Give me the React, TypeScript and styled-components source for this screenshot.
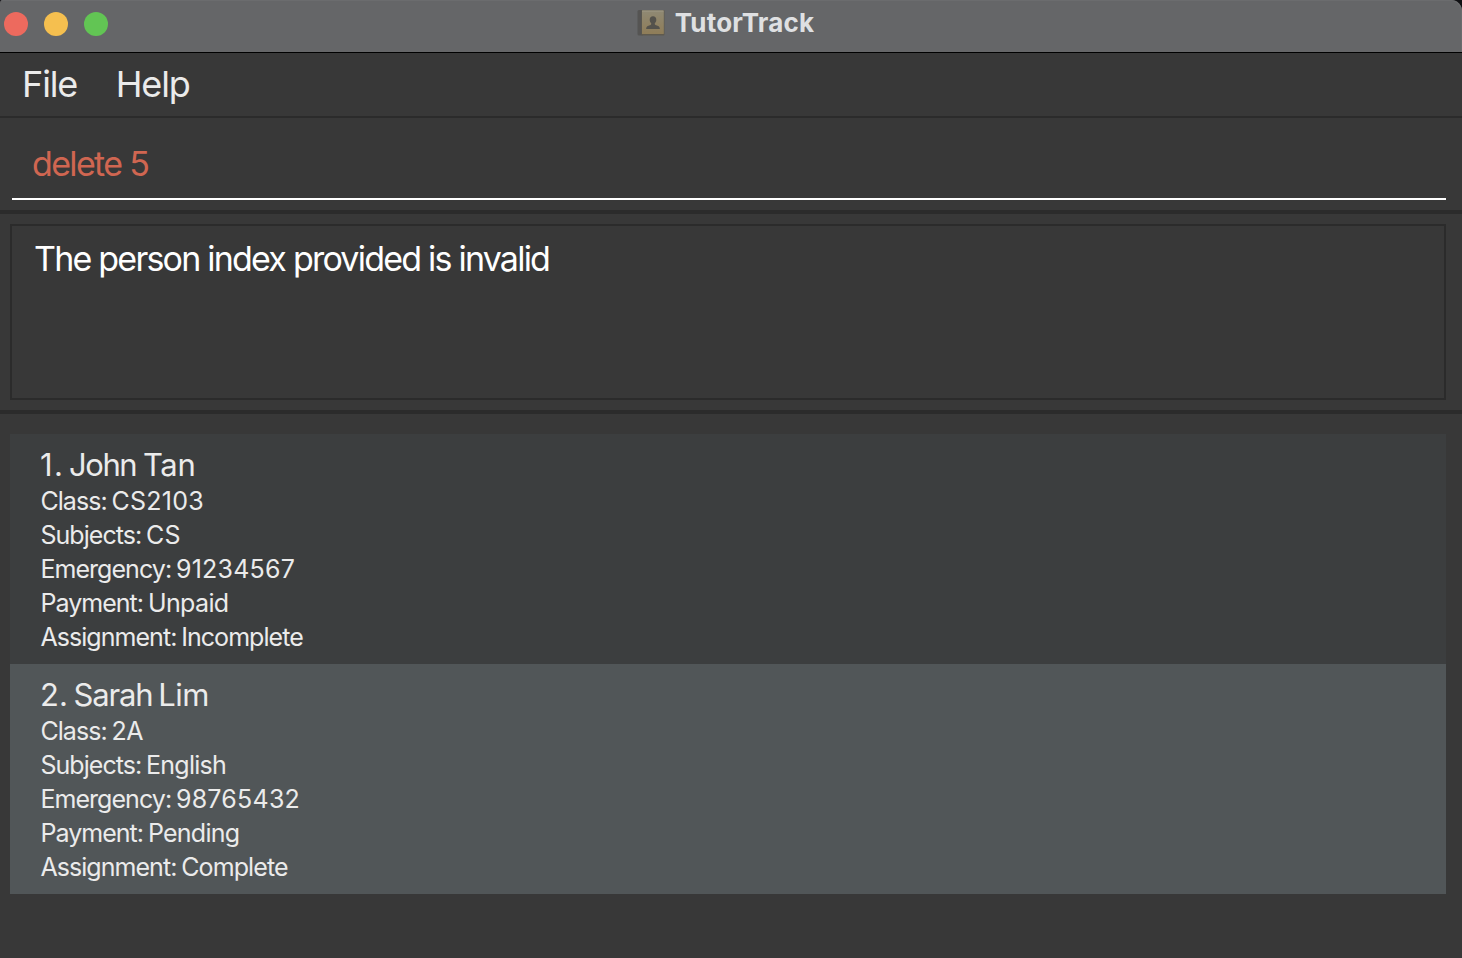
import React from 'react';
import styled, { createGlobalStyle } from 'styled-components';

const GlobalStyle = createGlobalStyle`
  *, *::before, *::after { box-sizing: border-box; }
  body {
    margin: 0;
    background: #000;
    font-family: Inter, "Noto Sans", sans-serif;
    overflow: hidden;
  }
`;

const Window = styled.div`
  display: flex;
  flex-direction: column;
  width: 1462px;
  height: 958px;
  overflow: hidden;
  background: #383838;
`;

const TitleBarBackdrop = styled.div`
  flex: none;
  background: #101013;
  border-bottom: 1px solid #000;
`;

const TitleBar = styled.header`
  display: grid;
  grid-template-columns: 1fr auto 1fr;
  align-items: center;
  height: 52px;
  padding: 0 15px 4px 4px;
  background: #656668;
  border-radius: 3px 11px 0 0;
  box-shadow: inset -1px 1px 0 #6b6c6e;
`;

const WindowControls = styled.div`
  display: flex;
  gap: 16px;
`;

const ControlDot = styled.span<{ $color: string }>`
  width: 24px;
  height: 24px;
  border-radius: 50%;
  background: ${({ $color }) => $color};
`;

const Title = styled.h1`
  display: flex;
  align-items: center;
  gap: 10px;
  margin: 0;
  font-size: 26px;
  line-height: 46px;
  font-weight: 700;
  letter-spacing: 0.22px;
  color: #dfe0e2;
  padding-bottom: 2px;
`;

const MenuBar = styled.nav`
  display: flex;
  flex: none;
  gap: 38.5px;
  height: 65px;
  padding-left: 22px;
  border-bottom: 2px solid #2b2b2b;
`;

const MenuItem = styled.span`
  font-size: 36px;
  line-height: 62px;
  letter-spacing: -1.12px;
  color: #ebebeb;
`;

const CommandSection = styled.section`
  flex: none;
  height: 96px;
  padding: 0 16px 0 12px;
  border-bottom: 4px solid #2b2b2b;
`;

const CommandField = styled.div`
  height: 82px;
  padding: 24px 0 0 20px;
  border-bottom: 2px solid #fff;
  font-size: 34px;
  line-height: 44px;
  letter-spacing: -1.65px;
  color: #d06651;
`;

const ResultSection = styled.section`
  flex: none;
  height: 200px;
  padding: 10px 16px 10px 10px;
  border-bottom: 4px solid #2b2b2b;
`;

const ResultBox = styled.div`
  height: 176px;
  padding: 11px 22px;
  border: 2px solid #2b2b2b;
  font-size: 34px;
  line-height: 44px;
  letter-spacing: -1.78px;
  color: #fff;
`;

const PersonList = styled.main`
  padding: 20px 16px 0 10px;
`;

const PersonCard = styled.article<{ $highlighted: boolean }>`
  height: 230px;
  padding: 12px 30px 10px;
  background: ${({ $highlighted }) => ($highlighted ? '#515658' : '#3c3e3f')};
  color: #ebebeb;
`;

const PersonName = styled.h2`
  display: flex;
  margin: 0;
  font-size: 31px;
  line-height: 38px;
  font-weight: 400;
`;

const NamePart = styled.span<{ $tracking: number; $gap: number }>`
  letter-spacing: ${({ $tracking }) => $tracking}px;
  margin-right: ${({ $gap }) => $gap}px;
`;

const Detail = styled.div`
  padding-left: 0.4px;
  font-size: 25px;
  line-height: 34px;
  white-space: pre;
`;

const DetailLabel = styled.span`
  letter-spacing: -0.95px;
  word-spacing: -1.3px;
`;

const DetailValue = styled.span<{ $tracking: number }>`
  letter-spacing: ${({ $tracking }) => $tracking}px;
`;

type Part = { text: string; tracking: number; gap: number };
type Field = { label: string; value: string; tracking: number };
type Person = { name: Part[]; fields: Field[] };

const people: Person[] = [
  {
    name: [
      { text: '1.', tracking: 1.4, gap: 4.6 },
      { text: 'John', tracking: -1.4, gap: 6.6 },
      { text: 'Tan', tracking: -0.3, gap: 0 },
    ],
    fields: [
      { label: 'Class', value: 'CS2103', tracking: 0.25 },
      { label: 'Subjects', value: 'CS', tracking: 0.3 },
      { label: 'Emergency', value: '91234567', tracking: 0.22 },
      { label: 'Payment', value: 'Unpaid', tracking: -0.62 },
      { label: 'Assignment', value: 'Incomplete', tracking: -0.95 },
    ],
  },
  {
    name: [
      { text: '2.', tracking: 0, gap: 5.6 },
      { text: 'Sarah', tracking: -1.15, gap: 5.9 },
      { text: 'Lim', tracking: -0.6, gap: 0 },
    ],
    fields: [
      { label: 'Class', value: '2A', tracking: -0.5 },
      { label: 'Subjects', value: 'English', tracking: -0.75 },
      { label: 'Emergency', value: '98765432', tracking: 0.24 },
      { label: 'Payment', value: 'Pending', tracking: -0.75 },
      { label: 'Assignment', value: 'Complete', tracking: -0.88 },
    ],
  },
];

function AddressBookIcon() {
  return (
    <svg width="28" height="28" viewBox="0 0 28 28" aria-hidden="true">
      <defs>
        <linearGradient id="cover" x1="0" y1="0" x2="0" y2="1">
          <stop offset="0" stopColor="#8f8974" />
          <stop offset="1" stopColor="#8f7d58" />
        </linearGradient>
      </defs>
      <rect x="0.5" y="1" width="6" height="25.5" rx="1.5" fill="#555453" />
      <rect x="4.5" y="1" width="23" height="25.5" rx="1" fill="#5f5a4e" />
      <rect x="5" y="1.5" width="21.8" height="23.6" rx="0.6" fill="url(#cover)" />
      <path d="M5 2h21.6" stroke="#a39e8b" strokeWidth="0.8" />
      <path
        d="M16 7.2c-2.1 0-3.3 1.5-3.3 3.5 0 1.5.6 2.7 1.5 3.5.2 1.1-.2 1.7-1.3 2.1-2 .6-3.6 1.1-3.8 3.7h13.8c-.2-2.6-1.8-3.1-3.8-3.7-1.1-.4-1.5-1-1.3-2.1.9-.8 1.5-2 1.5-3.5 0-2-1.2-3.5-3.3-3.5z"
        fill="#54524c"
      />
    </svg>
  );
}

export default function App() {
  return (
    <>
      <GlobalStyle />
      <Window>
        <TitleBarBackdrop>
          <TitleBar>
            <WindowControls>
              <ControlDot $color="#ed6a5e" />
              <ControlDot $color="#f5bf4f" />
              <ControlDot $color="#62c554" />
            </WindowControls>
            <Title>
              <AddressBookIcon />
              TutorTrack
            </Title>
          </TitleBar>
        </TitleBarBackdrop>
        <MenuBar>
          <MenuItem>File</MenuItem>
          <MenuItem>Help</MenuItem>
        </MenuBar>
        <CommandSection>
          <CommandField>delete 5</CommandField>
        </CommandSection>
        <ResultSection>
          <ResultBox>The person index provided is invalid</ResultBox>
        </ResultSection>
        <PersonList>
          {people.map((person, index) => (
            <PersonCard key={index} $highlighted={index % 2 === 1}>
              <PersonName>
                {person.name.map((part) => (
                  <NamePart key={part.text} $tracking={part.tracking} $gap={part.gap}>
                    {part.text}
                  </NamePart>
                ))}
              </PersonName>
              {person.fields.map((field) => (
                <Detail key={field.label}>
                  <DetailLabel>{field.label}: </DetailLabel>
                  <DetailValue $tracking={field.tracking}>{field.value}</DetailValue>
                </Detail>
              ))}
            </PersonCard>
          ))}
        </PersonList>
      </Window>
    </>
  );
}
